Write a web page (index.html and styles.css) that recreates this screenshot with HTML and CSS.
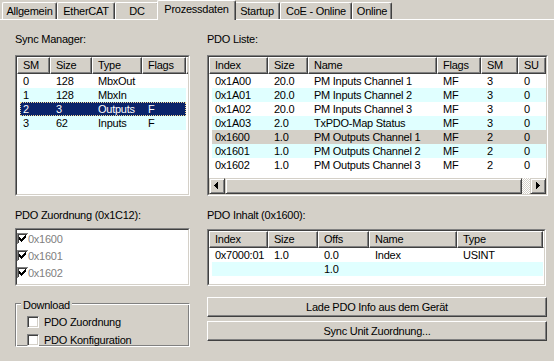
FILE: index.html
```html
<!DOCTYPE html>
<html>
<head>
<meta charset="utf-8">
<link rel="stylesheet" href="styles.css">
</head>
<body>
<div class="tabs">
  <div class="tab w-allg">Allgemein</div>
  <div class="tab w-ecat">EtherCAT</div>
  <div class="tab w-dc">DC</div>
  <div class="tab active w-proz">Prozessdaten</div>
  <div class="tab w-start">Startup</div>
  <div class="tab w-coe">CoE - Online</div>
  <div class="tab w-onl">Online</div>
</div>
<div class="panel">
  <div class="col">
    <div class="label">Sync Manager:</div>
    <div class="lv box-top">
      <div class="lv-in">
        <div class="hdr g-sm-h">
          <div class="hc">SM</div><div class="hc">Size</div><div class="hc">Type</div><div class="hc">Flags</div><div class="hc"></div>
        </div>
        <div class="row g-sm-r"><span>0</span><span>128</span><span>MbxOut</span><span></span></div>
        <div class="row g-sm-r alt"><span>1</span><span>128</span><span>MbxIn</span><span></span></div>
        <div class="row g-sm-r sel"><span>2</span><span>3</span><span>Outputs</span><span>F</span></div>
        <div class="row g-sm-r alt"><span>3</span><span>62</span><span>Inputs</span><span>F</span></div>
      </div>
    </div>
    <div class="label label2">PDO Zuordnung (0x1C12):</div>
    <div class="lv zuo">
      <div class="lv-in">
        <div class="zrow"><svg class="lcb" width="11" height="11" viewBox="0 0 11 11"><rect width="11" height="11" fill="#fff"/><path d="M0 0H11V1H1V11H0Z" fill="#808080"/><path d="M1 1H10V2H2V10H1Z" fill="#404040"/><path d="M8 2h1v1h-1z M7 3h2v1h-2z M2 4h1v1h-1z M6 4h3v1h-3z M2 5h2v1h-2z M5 5h3v1h-3z M2 6h5v1h-5z M3 7h3v1h-3z M4 8h1v1h-1z" fill="#000"/></svg><span>0x1600</span></div>
        <div class="zrow"><svg class="lcb" width="11" height="11" viewBox="0 0 11 11"><rect width="11" height="11" fill="#fff"/><path d="M0 0H11V1H1V11H0Z" fill="#808080"/><path d="M1 1H10V2H2V10H1Z" fill="#404040"/><path d="M8 2h1v1h-1z M7 3h2v1h-2z M2 4h1v1h-1z M6 4h3v1h-3z M2 5h2v1h-2z M5 5h3v1h-3z M2 6h5v1h-5z M3 7h3v1h-3z M4 8h1v1h-1z" fill="#000"/></svg><span>0x1601</span></div>
        <div class="zrow"><svg class="lcb" width="11" height="11" viewBox="0 0 11 11"><rect width="11" height="11" fill="#fff"/><path d="M0 0H11V1H1V11H0Z" fill="#808080"/><path d="M1 1H10V2H2V10H1Z" fill="#404040"/><path d="M8 2h1v1h-1z M7 3h2v1h-2z M2 4h1v1h-1z M6 4h3v1h-3z M2 5h2v1h-2z M5 5h3v1h-3z M2 6h5v1h-5z M3 7h3v1h-3z M4 8h1v1h-1z" fill="#000"/></svg><span>0x1602</span></div>
      </div>
    </div>
    <div class="group">
      <div class="legend">Download</div>
      <div class="opt"><span class="cb"></span><span>PDO Zuordnung</span></div>
      <div class="opt"><span class="cb"></span><span>PDO Konfiguration</span></div>
    </div>
  </div>
  <div class="col">
    <div class="label">PDO Liste:</div>
    <div class="lv box-top">
      <div class="lv-in">
        <div class="hdr g-pdo-h">
          <div class="hc">Index</div><div class="hc">Size</div><div class="hc">Name</div><div class="hc">Flags</div><div class="hc">SM</div><div class="hc">SU</div>
        </div>
        <div class="row g-pdo-r"><span>0x1A00</span><span>20.0</span><span>PM Inputs Channel 1</span><span>MF</span><span>3</span><span>0</span></div>
        <div class="row g-pdo-r alt"><span>0x1A01</span><span>20.0</span><span>PM Inputs Channel 2</span><span>MF</span><span>3</span><span>0</span></div>
        <div class="row g-pdo-r"><span>0x1A02</span><span>20.0</span><span>PM Inputs Channel 3</span><span>MF</span><span>3</span><span>0</span></div>
        <div class="row g-pdo-r alt"><span>0x1A03</span><span>2.0</span><span>TxPDO-Map Status</span><span>MF</span><span>3</span><span>0</span></div>
        <div class="row g-pdo-r inact"><span>0x1600</span><span>1.0</span><span>PM Outputs Channel 1</span><span>MF</span><span>2</span><span>0</span></div>
        <div class="row g-pdo-r alt"><span>0x1601</span><span>1.0</span><span>PM Outputs Channel 2</span><span>MF</span><span>2</span><span>0</span></div>
        <div class="row g-pdo-r"><span>0x1602</span><span>1.0</span><span>PM Outputs Channel 3</span><span>MF</span><span>2</span><span>0</span></div>
        <div class="sb">
          <div class="sb-btn"><svg width="14" height="14" viewBox="0 0 14 14"><path d="M4 6h1v1h-1z M5 5h1v3h-1z M6 4h1v5h-1z M7 3h1v7h-1z" fill="#000"/></svg></div>
          <div class="sb-thumb"></div>
          <div class="sb-track"></div>
          <div class="sb-btn"><svg width="14" height="14" viewBox="0 0 14 14"><path d="M5 3h1v7h-1z M6 4h1v5h-1z M7 5h1v3h-1z M8 6h1v1h-1z" fill="#000"/></svg></div>
        </div>
      </div>
    </div>
    <div class="label label2">PDO Inhalt (0x1600):</div>
    <div class="lv inhalt">
      <div class="lv-in">
        <div class="hdr g-inh-h">
          <div class="hc">Index</div><div class="hc">Size</div><div class="hc">Offs</div><div class="hc">Name</div><div class="hc">Type</div><div class="hc"></div>
        </div>
        <div class="row g-inh-r"><span>0x7000:01</span><span>1.0</span><span>0.0</span><span>Index</span><span>USINT</span></div>
        <div class="row g-inh-r alt"><span></span><span></span><span>1.0</span><span></span><span></span></div>
      </div>
    </div>
    <button class="btn btn1">Lade PDO Info aus dem Gerät</button>
    <button class="btn btn2">Sync Unit Zuordnung...</button>
  </div>
</div>
</body>
</html>
```

FILE: styles.css
```css
html, body {
  margin: 0;
  padding: 0;
}
body {
  width: 554px;
  height: 361px;
  overflow: hidden;
  background: #d4d0c8;
  font-family: "Liberation Sans", Arial, sans-serif;
  font-size: 11px;
  letter-spacing: -0.25px;
  color: #000;
}

/* tabs */
.tabs {
  display: flex;
  align-items: flex-end;
  height: 19px;
  padding-left: 2px;
  border-bottom: 1px solid #fff;
}
.tab {
  box-sizing: border-box;
  flex: none;
  height: 17px;
  border-top: 1px solid #fff;
  border-left: 1px solid #fff;
  border-right: 1px solid #404040;
  border-top-left-radius: 2px;
  border-top-right-radius: 2px;
  box-shadow: inset -1px 0 #808080;
  text-align: center;
  line-height: 16px;
  white-space: nowrap;
  background: #d4d0c8;
}
.tab.active {
  height: 20px;
  margin: 0 -2px -1px;
  z-index: 1;
}
.w-allg { width: 55px; }
.w-ecat { width: 58px; }
.w-dc { width: 44px; }
.w-proz { width: 79px; }
.w-start { width: 46px; }
.w-coe { width: 72px; }
.w-onl { width: 40px; }

/* panel */
.panel {
  display: grid;
  grid-template-columns: 175px 341px;
  column-gap: 17px;
  padding: 13px 0 0 15px;
}
.col {
  display: flex;
  flex-direction: column;
  align-items: flex-start;
}
.label {
  height: 13px;
  line-height: 13px;
  white-space: nowrap;
}
.label2 { margin-top: 13px; }

/* list views */
.lv {
  box-sizing: border-box;
  border: 1px solid;
  border-color: #808080 #fff #fff #808080;
  align-self: stretch;
}
.lv-in {
  box-sizing: border-box;
  height: 100%;
  border: 1px solid;
  border-color: #404040 #d4d0c8 #d4d0c8 #404040;
  background: #fff;
  display: flex;
  flex-direction: column;
  overflow: hidden;
}
.box-top { margin-top: 9px; height: 141px; }
.zuo { margin-top: 6px; height: 58px; }
.inhalt { margin-top: 7px; height: 57px; align-self: flex-start; width: 339px; }

.hdr {
  display: grid;
  flex: none;
  height: 17px;
}
.hc {
  box-sizing: border-box;
  height: 17px;
  border: 1px solid;
  border-color: #fff #404040 #404040 #fff;
  box-shadow: inset -1px -1px #808080;
  background: #d4d0c8;
  padding-left: 5px;
  line-height: 15px;
  white-space: nowrap;
  overflow: hidden;
}
.row {
  display: grid;
  flex: none;
  height: 14px;
  line-height: 14px;
  margin-left: 3px;
  align-self: flex-start;
}
.row > span {
  padding-left: 6px;
  white-space: nowrap;
  overflow: hidden;
}
.row > span:first-child { padding-left: 3px; }
.row.alt { background: #e0ffff; }
.row.inact { background: #d4d0c8; }
.row.sel {
  background: #0a246a;
  color: #fff;
  outline: 1px dotted #f5db95;
  outline-offset: -1px;
}

.g-sm-h { grid-template-columns: 33px 42px 50px 44px 1fr; }
.g-sm-r { grid-template-columns: 30px 42px 50px 44px; }
.g-pdo-h { grid-template-columns: 59px 40px 129px 44px 37px 28px; }
.g-pdo-r { grid-template-columns: 56px 40px 129px 44px 37px 28px; }
.g-inh-h { grid-template-columns: 59px 50px 51px 88px 86px 1fr; }
.g-inh-r { grid-template-columns: 56px 50px 51px 88px 86px; }

/* scrollbar */
.sb {
  display: flex;
  flex: none;
  height: 16px;
  margin-top: auto;
}
.sb-btn, .sb-thumb {
  box-sizing: border-box;
  height: 16px;
  border: 1px solid;
  border-color: #d4d0c8 #404040 #404040 #d4d0c8;
  box-shadow: inset 1px 1px #fff, inset -1px -1px #808080;
  background: #d4d0c8;
}
.sb-btn { width: 16px; flex: none; }
.sb-btn svg { display: block; }
.sb-thumb { flex: 1; }
.sb-track {
  width: 8px;
  flex: none;
  background: repeating-conic-gradient(#fff 0% 25%, #d4d0c8 0% 50%) 0 0 / 2px 2px;
}

/* checkbox list */
.zrow {
  display: flex;
  align-items: center;
  height: 17px;
  color: #808080;
  white-space: nowrap;
}
.lcb { display: block; flex: none; }

/* group */
.group {
  box-sizing: border-box;
  align-self: stretch;
  margin-top: 17px;
  height: 44px;
  border: 1px solid;
  border-color: #808080 #fff #fff #808080;
  box-shadow: inset 1px 1px #fff, inset -1px -1px #808080;
  display: flex;
  flex-direction: column;
}
.legend {
  align-self: flex-start;
  margin: -5px 0 0 5px;
  padding: 0 2px;
  height: 13px;
  line-height: 13px;
  background: #d4d0c8;
}
.opt {
  display: flex;
  align-items: center;
  height: 13px;
  padding-left: 11px;
  gap: 5px;
  margin-top: 5px;
  white-space: nowrap;
}
.legend + .opt { margin-top: 3px; }
.cb {
  box-sizing: border-box;
  width: 12px;
  height: 12px;
  border: 1px solid;
  border-color: #808080 #fff #fff #808080;
  box-shadow: inset 1px 1px #404040, inset -1px -1px #d4d0c8;
  background: #fff;
}

/* buttons */
.btn {
  box-sizing: border-box;
  width: 340px;
  height: 20px;
  padding: 0;
  border: 1px solid;
  border-color: #fff #404040 #404040 #fff;
  box-shadow: inset -1px -1px #808080;
  background: #d4d0c8;
  font: inherit;
  letter-spacing: inherit;
  color: #000;
  line-height: 18px;
  text-align: center;
}
.btn1 { margin-top: 11px; }
.btn2 { margin-top: 4px; }
```
